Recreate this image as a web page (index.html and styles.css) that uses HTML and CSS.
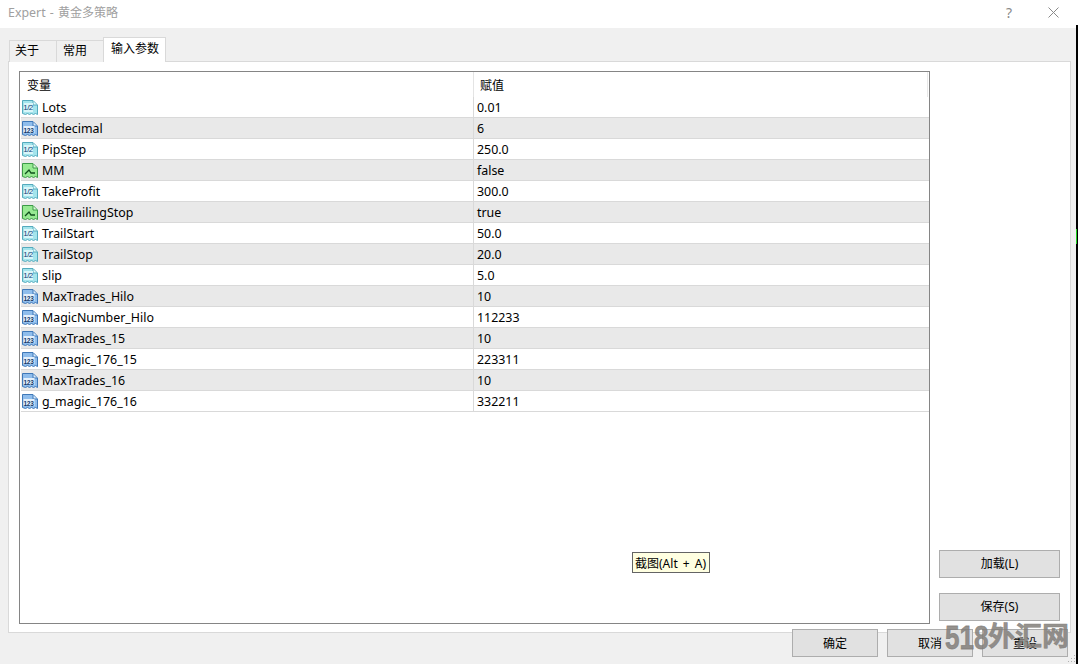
FILE: index.html
```html
<!DOCTYPE html>
<html lang="zh">
<head>
<meta charset="utf-8">
<title>Expert - 黄金多策略</title>
<link rel="stylesheet" href="styles.css">
</head>
<body>
<svg class="defs" width="0" height="0">
  <defs>
    <path id="shell" d="M0.5 0.5H11L15.5 5V14.5L13.5 13.5L11.5 14.5L9.5 13.5L7.5 14.5L5.5 13.5L3.5 14.5L0.5 13.5Z"/>
    <symbol id="doc-dbl" viewBox="0 0 16 16">
      <use href="#shell" fill="#a4e4ec" stroke="#54aabd"/>
      <path d="M11 1V5H15" fill="#e6fbfd" stroke="#54aabd"/>
      <rect x="2" y="3" width="9" height="9" fill="#d9f6f9"/>
    </symbol>
    <symbol id="doc-int" viewBox="0 0 16 16">
      <use href="#shell" fill="#8fbdec" stroke="#3f78b8"/>
      <path d="M11 1V5H15" fill="#dcecfb" stroke="#3f78b8"/>
      <rect x="1.5" y="5" width="11" height="7" fill="#e4f0fb"/>
    </symbol>
    <symbol id="doc-bool" viewBox="0 0 16 16">
      <use href="#shell" fill="#97ea92" stroke="#3c9a48"/>
      <path d="M11 1V5H15" fill="#def9dc" stroke="#3c9a48"/>
      <path d="M3 11L7 7L9 10H13" fill="none" stroke="#0f4f1c" stroke-width="1.3"/>
    </symbol>
  </defs>
</svg>
<div class="window">
  <header class="titlebar">
    <span class="title">Expert - <span class="cjk">黄金多策略</span></span>
    <span class="help">?</span>
    <svg class="close" width="11" height="11" viewBox="0 0 11 11"><path d="M0.5 0.5L10.5 10.5M10.5 0.5L0.5 10.5" stroke="#8a8a8a" fill="none"/></svg>
  </header>
  <main class="content">
    <nav class="tabs">
      <span class="tab">关于</span>
      <span class="tab">常用</span>
      <span class="tab active">输入参数</span>
    </nav>
    <section class="panel">
      <div class="table">
        <div class="row head"><div class="c1">变量</div><div class="c2">赋值</div></div>
        <div class="row"><div class="c1"><svg class="ico"><use href="#doc-dbl"/></svg><i class="tag">1/2</i>Lots</div><div class="c2">0.01</div></div>
        <div class="row alt"><div class="c1"><svg class="ico"><use href="#doc-int"/></svg><i class="tag num">123</i>lotdecimal</div><div class="c2">6</div></div>
        <div class="row"><div class="c1"><svg class="ico"><use href="#doc-dbl"/></svg><i class="tag">1/2</i>PipStep</div><div class="c2">250.0</div></div>
        <div class="row alt"><div class="c1"><svg class="ico"><use href="#doc-bool"/></svg>MM</div><div class="c2">false</div></div>
        <div class="row"><div class="c1"><svg class="ico"><use href="#doc-dbl"/></svg><i class="tag">1/2</i>TakeProfit</div><div class="c2">300.0</div></div>
        <div class="row alt"><div class="c1"><svg class="ico"><use href="#doc-bool"/></svg>UseTrailingStop</div><div class="c2">true</div></div>
        <div class="row"><div class="c1"><svg class="ico"><use href="#doc-dbl"/></svg><i class="tag">1/2</i>TrailStart</div><div class="c2">50.0</div></div>
        <div class="row alt"><div class="c1"><svg class="ico"><use href="#doc-dbl"/></svg><i class="tag">1/2</i>TrailStop</div><div class="c2">20.0</div></div>
        <div class="row"><div class="c1"><svg class="ico"><use href="#doc-dbl"/></svg><i class="tag">1/2</i>slip</div><div class="c2">5.0</div></div>
        <div class="row alt"><div class="c1"><svg class="ico"><use href="#doc-int"/></svg><i class="tag num">123</i>MaxTrades_Hilo</div><div class="c2">10</div></div>
        <div class="row"><div class="c1"><svg class="ico"><use href="#doc-int"/></svg><i class="tag num">123</i>MagicNumber_Hilo</div><div class="c2">112233</div></div>
        <div class="row alt"><div class="c1"><svg class="ico"><use href="#doc-int"/></svg><i class="tag num">123</i>MaxTrades_15</div><div class="c2">10</div></div>
        <div class="row"><div class="c1"><svg class="ico"><use href="#doc-int"/></svg><i class="tag num">123</i>g_magic_176_15</div><div class="c2">223311</div></div>
        <div class="row alt"><div class="c1"><svg class="ico"><use href="#doc-int"/></svg><i class="tag num">123</i>MaxTrades_16</div><div class="c2">10</div></div>
        <div class="row"><div class="c1"><svg class="ico"><use href="#doc-int"/></svg><i class="tag num">123</i>g_magic_176_16</div><div class="c2">332211</div></div>
        <span class="tooltip"><span class="cjk">截图</span>(Alt + A)</span>
      </div>
      <aside class="side">
        <button class="btn side-btn">加载(L)</button>
        <button class="btn side-btn">保存(S)</button>
      </aside>
    </section>
    <footer class="actions">
      <button class="btn foot">确定</button>
      <button class="btn foot">取消</button>
      <button class="btn foot">重设</button>
    </footer>
    <span class="watermark"><span class="digits">518</span>外汇网</span>
    <svg class="grip" width="9" height="9" viewBox="0 0 9 9"><path d="M7 1h1v1H7zM4 4h1v1H4zM7 4h1v1H7zM1 7h1v1H1zM4 7h1v1H4zM7 7h1v1H7z" fill="#b0b0b0"/></svg>
  </main>
</div>
<div class="edge-top"></div>
<div class="edge-mark"></div>
</body>
</html>
```
FILE: styles.css
```css
* { box-sizing: border-box; }
html, body { margin: 0; height: 100%; overflow: hidden; background: #000; }
body { font-family: "Noto Sans", "Noto Sans CJK SC", sans-serif; font-size: 12.4px; color: #000; position: relative; }
.cjk { font-family: "Noto Sans CJK SC", sans-serif; font-size: 12px; }
.defs { position: absolute; }
.window { width: 1076px; height: 664px; display: flex; flex-direction: column; background: #f0f0f0; }
.titlebar { height: 28px; background: #fff; display: flex; align-items: center; padding: 0 0 4px 8px; flex: none; }
.title { color: #a0a0a0; flex: 1; word-spacing: 1px; }
.help { color: #8a8a8a; font-size: 14px; margin-right: 36px; }
.close { margin-right: 17px; }
.content { flex: 1; position: relative; padding: 9px 6px 0 8px; display: flex; flex-direction: column; }
.tabs { display: flex; height: 25px; align-items: flex-end; padding-left: 1px; position: relative; z-index: 1; font-family: "Noto Sans CJK SC", sans-serif; font-size: 12px; }
.tab { height: 22px; padding: 0 5px; line-height: 18px; background: #f0f0f0; border: 1px solid #d9d9d9; border-bottom: 0; margin-right: -1px; width: 48px; white-space: nowrap; }
.tab:nth-child(2) { padding-left: 6px; }
.tab.active { height: 25px; background: #fff; width: 63px; line-height: 20px; padding: 0 7px; margin-right: 0; }
.panel { height: 572px; width: 1063px; margin-top: -1px; background: #fff; border: 1px solid #d9d9d9; display: flex; padding: 9px 10px 6px 10px; }
.table { width: 911px; height: 553px; border: 1px solid #858585; background: #fff; position: relative; flex: none; }
.row { display: flex; height: 21px; border-bottom: 1px solid #d9d9d9; line-height: 21px; margin-left: 1px; }
.row.alt { background: #e9e9e9; }
.row.head { height: 25px; line-height: 26px; border-bottom: 0; font-family: "Noto Sans CJK SC", sans-serif; font-size: 12px; }
.head .c1 { padding-left: 6px; }
.head .c2 { border-left-color: #e4e4e4; border-right: 1px solid #e8e8e8; margin-right: 1px; padding-left: 6px; }
.c1 { width: 452px; padding-left: 21px; position: relative; white-space: nowrap; }
.c2 { flex: 1; padding-left: 3px; border-left: 1px solid #d9d9d9; }
.ico { position: absolute; left: 1px; top: 3px; width: 16px; height: 16px; }
.tag { position: absolute; left: 2px; top: 6px; width: 10px; font: 8px/9px "Liberation Sans", sans-serif; color: #0f3f7a; letter-spacing: -0.5px; text-align: center; }
.tag.num { left: 2px; top: 8px; width: 11px; font-weight: bold; font-size: 6.5px; letter-spacing: -0.3px; color: #12386b; }
.tooltip { position: absolute; left: 612px; top: 480px; height: 21px; width: 78px; line-height: 19px; background: #ffffe1; border: 1px solid #646464; padding-left: 2px; white-space: nowrap; word-spacing: 2px; font-size: 12px; }
.side { flex: 1; display: flex; flex-direction: column; align-items: flex-end; padding-top: 479px; gap: 15px; }
.btn { width: 121px; height: 28px; background: #e1e1e1; border: 1px solid #adadad; font: 12px "Noto Sans", "Noto Sans CJK SC", sans-serif; color: #000; padding: 0; flex: none; }
.side-btn { padding-bottom: 2px; }
.actions { display: flex; gap: 9px; margin-top: -4px; margin-left: 784px; position: relative; }
.foot { width: 86px; }
.watermark { position: absolute; left: 945px; top: 588px; font: bold 27px/38px "Noto Sans CJK SC", sans-serif; color: rgba(130, 126, 122, 0.85); white-space: nowrap; -webkit-text-stroke: 0.6px rgba(130, 126, 122, 0.85); }
.digits { display: inline-block; font-family: "Liberation Sans", sans-serif; font-size: 26px; transform: scaleY(1.28); width: 43px; }
.grip { position: absolute; right: 0; bottom: 1px; }
.edge-top { position: absolute; left: 1076px; top: 0; width: 2px; height: 25px; background: #fff; }
.edge-mark { position: absolute; left: 1076px; top: 229px; width: 1px; height: 15px; background: #1fd01f; }
```
